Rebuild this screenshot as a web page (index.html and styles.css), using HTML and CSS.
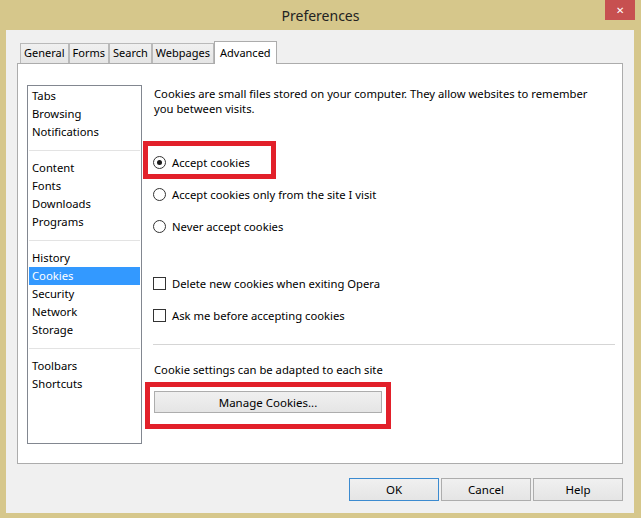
FILE: index.html
```html
<!DOCTYPE html>
<html lang="en">
<head>
    <meta charset="UTF-8">
    <title>Preferences</title>
    <link rel="stylesheet" href="styles.css">
</head>
<body>
    <div class="window">
        <div class="titlebar">
            <span></span>
            <span class="title">Preferences</span>
            <span class="close">&#x2715;</span>
        </div>

        <div class="client">
            <div class="tabs">
                <div class="tab">General</div>
                <div class="tab">Forms</div>
                <div class="tab">Search</div>
                <div class="tab">Webpages</div>
                <div class="tab active">Advanced</div>
            </div>

            <div class="panel">
                <div class="sidebar">
                    <div class="group">
                        <div class="item">Tabs</div>
                        <div class="item">Browsing</div>
                        <div class="item">Notifications</div>
                    </div>
                    <div class="group">
                        <div class="item">Content</div>
                        <div class="item">Fonts</div>
                        <div class="item">Downloads</div>
                        <div class="item">Programs</div>
                    </div>
                    <div class="group">
                        <div class="item">History</div>
                        <div class="item selected">Cookies</div>
                        <div class="item">Security</div>
                        <div class="item">Network</div>
                        <div class="item">Storage</div>
                    </div>
                    <div class="group">
                        <div class="item">Toolbars</div>
                        <div class="item">Shortcuts</div>
                    </div>
                </div>

                <div class="page">
                    <p class="intro">Cookies are small files stored on your computer. They allow websites to remember you between visits.</p>

                    <div class="option first-radio"><span class="radio checked"></span>Accept cookies</div>
                    <div class="option"><span class="radio"></span>Accept cookies only from the site I visit</div>
                    <div class="option"><span class="radio"></span>Never accept cookies</div>

                    <div class="option first-check"><span class="check"></span>Delete new cookies when exiting Opera</div>
                    <div class="option"><span class="check"></span>Ask me before accepting cookies</div>

                    <div class="divider"></div>

                    <p class="note">Cookie settings can be adapted to each site</p>
                    <button class="manage">Manage Cookies...</button>

                    <!-- red highlight boxes drawn over the dialog -->
                    <div class="mark mark-accept"></div>
                    <div class="mark mark-manage"></div>
                </div>
            </div>

            <div class="buttons">
                <button class="btn default">OK</button>
                <button class="btn">Cancel</button>
                <button class="btn">Help</button>
            </div>
        </div>
    </div>
</body>
</html>
```

FILE: styles.css
```css
* {
    box-sizing: border-box;
}
body {
    margin: 0;
    background-color: #d6c78b;
    font-family: "Noto Sans", "Open Sans", sans-serif;
    font-size: 11.25px;
    color: #000;
}
.window {
    width: 641px;
    height: 518px;
    display: flex;
    flex-direction: column;
}
.titlebar {
    height: 30px;
    display: grid;
    grid-template-columns: 1fr auto 1fr;
}
.title {
    align-self: center;
    font-size: 14px;
    color: #222;
}
.close {
    justify-self: end;
    width: 30px;
    height: 20px;
    margin-right: 6px;
    background-color: #c75050;
    color: #fff;
    font-size: 10px;
    display: flex;
    align-items: center;
    justify-content: center;
}
.client {
    flex: 1;
    margin: 0 7px 5px 6px;
    background-color: #f0f0f0;
    padding: 11px 11px 0 11px;
}

/* tabs */
.tabs {
    display: flex;
    align-items: flex-end;
    height: 22px;
    padding-left: 3px;
    font-size: 11px;
}
.tab {
    height: 20px;
    padding: 0 3px;
    line-height: 18px;
    border: 1px solid #b9b9b9;
    border-bottom: none;
    background: linear-gradient(#f0f0f0, #e5e5e5);
}
.tab.active {
    position: relative;
    height: 23px;
    margin-bottom: -1px;
    padding: 0 5px;
    line-height: 21px;
    background: #fff;
    border-color: #acacac;
}

/* main panel */
.panel {
    height: 401px;
    background-color: #fff;
    border: 1px solid #acacac;
    display: flex;
    padding: 21px 7px 19px 9px;
}
.sidebar {
    width: 115px;
    border: 1px solid #828790;
    padding: 1px;
}
.group + .group {
    border-top: 1px solid #e3e3e3;
    margin-top: 9px;
    padding-top: 8px;
}
.item {
    height: 18px;
    line-height: 18px;
    padding-left: 3px;
}
.item.selected {
    background-color: #3399ff;
    color: #fff;
}

.page {
    position: relative;
    flex: 1;
    margin-left: 11px;
}
.intro {
    margin: 0 16px 0 0;
    padding: 1px 0 0 1px;
    line-height: 15px;
}
.option {
    height: 20px;
    display: flex;
    align-items: center;
    gap: 6px;
    margin-top: 12px;
}
.option.first-radio {
    margin-top: 36px;
}
.option.first-check {
    margin-top: 37px;
}
.radio {
    width: 13px;
    height: 13px;
    border: 1px solid #333;
    border-radius: 50%;
    background-color: #fff;
    display: flex;
    align-items: center;
    justify-content: center;
}
.radio.checked::after {
    content: "";
    width: 5px;
    height: 5px;
    border-radius: 50%;
    background-color: #1a1a1a;
}
.check {
    width: 13px;
    height: 13px;
    border: 1px solid #333;
    background-color: #fff;
}
.divider {
    height: 1px;
    background-color: #d5d5d5;
    margin-top: 19px;
}
.note {
    margin: 17px 0 0 1px;
    line-height: 15px;
}
.manage {
    display: block;
    margin: 14px 0 0 1px;
    width: 228px;
    height: 22px;
    font-family: inherit;
    font-size: 11.5px;
    border: 1px solid #adadad;
    background: linear-gradient(#f0f0f0, #e5e5e5);
    padding: 0;
}
.mark {
    position: absolute;
    border: 5px solid #e2202a;
}
.mark-accept {
    left: -10px;
    top: 56px;
    width: 133px;
    height: 38px;
}
.mark-manage {
    left: -8px;
    top: 297px;
    width: 246px;
    height: 47px;
}

/* dialog buttons */
.buttons {
    display: flex;
    justify-content: flex-end;
    gap: 2px;
    margin-top: 14px;
}
.btn {
    width: 90px;
    height: 23px;
    font-family: inherit;
    font-size: 11.5px;
    border: 1px solid #adadad;
    background: linear-gradient(#f0f0f0, #e5e5e5);
    padding: 0;
}
.btn.default {
    border-color: #3c8bd0;
}
```
